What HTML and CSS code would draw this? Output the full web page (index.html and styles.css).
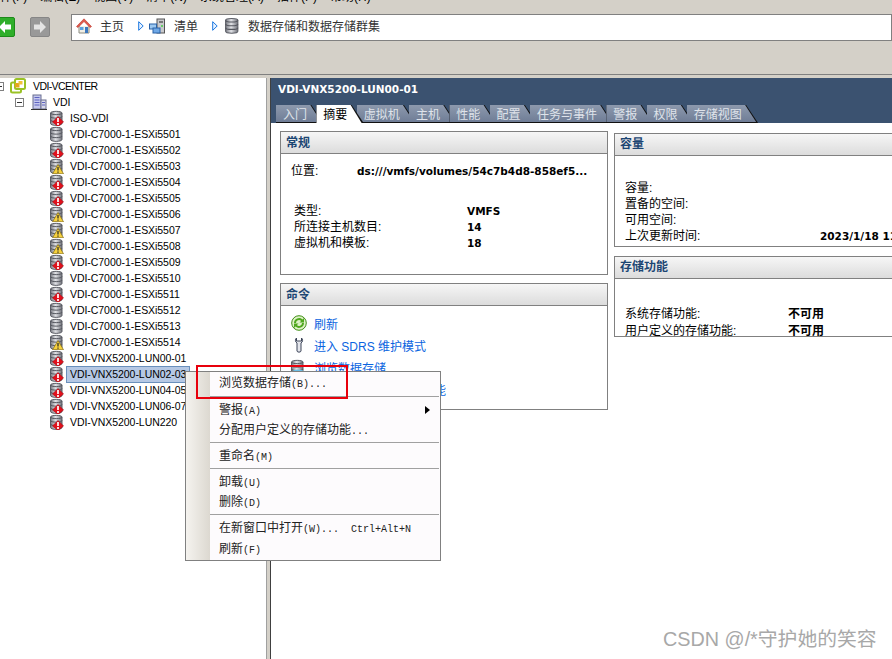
FILE: index.html
```html
<!DOCTYPE html>
<html lang="zh-CN">
<head>
  <meta charset="UTF-8">
  <title>数据存储和数据存储群集</title>
  <link rel="stylesheet" href="styles.css">
</head>
<body>
  <!-- icon sprites -->
  <svg class="sprites" width="0" height="0">
    <defs>
      <linearGradient id="dbFill" x1="0" x2="1" y1="0" y2="0">
        <stop offset="0" stop-color="#777981"/>
        <stop offset=".45" stop-color="#e2e3e7"/>
        <stop offset="1" stop-color="#6f7179"/>
      </linearGradient>
      <symbol id="db" viewBox="0 0 16 16">
        <path d="M.5 3C.5 .8 12 .8 12 3V13.500C12 16 .5 16 .5 13.500Z" fill="url(#dbFill)" stroke="#5c5e66"/>
        <path d="M.5 3C.5 5.200 12 5.200 12 3M.5 6.500C.5 8.700 12 8.700 12 6.500M.5 10C.5 12.200 12 12.200 12 10" fill="none" stroke="#55575f"/>
      </symbol>
      <symbol id="db-error" viewBox="0 0 16 16">
        <use href="#db"/>
        <path d="M8 6.500 13.500 12 8 16.500 2.500 12Z" fill="#e2101c" stroke="#a30a12" stroke-width=".6"/>
        <path d="M8 8V12M8 13V15" stroke="#fff" stroke-width="1.700"/>
      </symbol>
      <symbol id="db-warn" viewBox="0 0 16 16">
        <use href="#db"/>
        <path d="M8 6.500 13.500 15.800H2.500Z" fill="#f7d23e" stroke="#8a7420" stroke-width=".8"/>
        <path d="M8 9V12.600M8 13.400V14.800" stroke="#222" stroke-width="1.200"/>
      </symbol>
    </defs>
  </svg>

  <div class="menubar">
    <span>文件(F)</span><span>编辑(E)</span><span>视图(V)</span><span>清单(N)</span><span>系统管理(A)</span><span>插件(P)</span><span>帮助(H)</span>
  </div>

  <div class="toolbar">
    <div class="nav-btn nav-back">
      <svg width="14" height="14" viewBox="0 0 14 14"><path d="M7 1 1 7l6 6V9.500h6v-5H7Z" fill="#fff"/></svg>
    </div>
    <div class="nav-btn nav-forward">
      <svg width="14" height="14" viewBox="0 0 14 14"><path d="M7 1l6 6-6 6V9.500H1v-5h6Z" fill="#e4e4e4"/></svg>
    </div>
    <div class="address">
      <svg class="crumb-home" width="16" height="16" viewBox="0 0 16 16">
        <path d="M3 8V15H13V8" fill="#f1efe6" stroke="#8b8b80"/>
        <path d="M.5 8.500 8 .8l7.500 7.700-1.500 1L8 3.500 2 9.500Z" fill="#e0584c" stroke="#b8392f" stroke-width=".6"/>
        <rect x="4" y="9" width="3.500" height="3" fill="#5aa0e0"/>
        <rect x="9" y="9" width="3" height="6" fill="#3b78c0"/>
      </svg>
      <span class="crumb crumb-first">主页</span>
      <svg class="crumb-arrow" width="6" height="10" viewBox="0 0 6 10"><path d="M.7.700 5.200 5 .7 9.300Z" fill="#e8f2ff" stroke="#1c78e0"/></svg>
      <svg class="crumb-icon" width="16" height="16" viewBox="0 0 16 16">
        <rect x="8" y="1" width="7.500" height="14" fill="#c9c9cc" stroke="#555"/>
        <rect x="10" y="3" width="4" height="2" fill="#777"/>
        <circle cx="13" cy="8" r="1" fill="#4c4"/>
        <rect x=".5" y="6" width="7" height="5" fill="#9cc8f0" stroke="#2a62a8"/>
        <rect x="4" y="10" width="7" height="5" fill="#6fa8e6" stroke="#2a62a8"/>
      </svg>
      <span class="crumb">清单</span>
      <svg class="crumb-arrow" width="6" height="10" viewBox="0 0 6 10"><path d="M.7.700 5.200 5 .7 9.300Z" fill="#e8f2ff" stroke="#1c78e0"/></svg>
      <svg class="crumb-db" width="14" height="17" viewBox="0 0 13 16"><use href="#db" width="16" height="16"/></svg>
      <span class="crumb">数据存储和数据存储群集</span>
    </div>
  </div>

  <div class="main">
    <div class="tree">
      <div class="tree-row">
        <span class="expander expander-root"></span>
        <svg class="icon-vc" width="16" height="16" viewBox="0 0 16 16">
          <rect x="1" y="4.500" width="10" height="10" rx="1.500" fill="#fff" stroke="#9ac225" stroke-width="2"/>
          <rect x="5" y="1" width="10" height="10" rx="1.500" fill="#fff" stroke="#9ac225" stroke-width="2"/>
          <rect x="5" y="5" width="4.500" height="4.500" fill="#e5a51d"/>
          <rect x="8.500" y="3" width="4" height="3.500" fill="#f0c23a"/>
        </svg>
        <span class="tree-label tree-label-root">VDI-VCENTER</span>
      </div>
      <div class="tree-row">
        <span class="expander expander-dc"></span>
        <svg class="icon-dc" width="16" height="16" viewBox="0 0 16 16">
          <rect x="2" y="1" width="8" height="14" fill="#c5c8ee" stroke="#6a6f90"/>
          <rect x="10" y="6" width="5" height="9" fill="#d7d8e8" stroke="#6a6f90"/>
          <path d="M3.500 3.500h5M3.500 6h5M3.500 8.500h5M3.500 11h5M11 8.500h3M11 11h3" stroke="#5c62c0"/>
          <path d="M0 15.500h16" stroke="#333"/>
        </svg>
        <span class="tree-label tree-label-dc">VDI</span>
      </div>
      <div class="tree-row"><svg class="db-icon" width="16" height="16"><use href="#db-error"/></svg><span class="tree-label">ISO-VDI</span></div>
      <div class="tree-row"><svg class="db-icon" width="16" height="16"><use href="#db"/></svg><span class="tree-label">VDI-C7000-1-ESXi5501</span></div>
      <div class="tree-row"><svg class="db-icon" width="16" height="16"><use href="#db-error"/></svg><span class="tree-label">VDI-C7000-1-ESXi5502</span></div>
      <div class="tree-row"><svg class="db-icon" width="16" height="16"><use href="#db-warn"/></svg><span class="tree-label">VDI-C7000-1-ESXi5503</span></div>
      <div class="tree-row"><svg class="db-icon" width="16" height="16"><use href="#db-error"/></svg><span class="tree-label">VDI-C7000-1-ESXi5504</span></div>
      <div class="tree-row"><svg class="db-icon" width="16" height="16"><use href="#db-error"/></svg><span class="tree-label">VDI-C7000-1-ESXi5505</span></div>
      <div class="tree-row"><svg class="db-icon" width="16" height="16"><use href="#db-warn"/></svg><span class="tree-label">VDI-C7000-1-ESXi5506</span></div>
      <div class="tree-row"><svg class="db-icon" width="16" height="16"><use href="#db-warn"/></svg><span class="tree-label">VDI-C7000-1-ESXi5507</span></div>
      <div class="tree-row"><svg class="db-icon" width="16" height="16"><use href="#db-warn"/></svg><span class="tree-label">VDI-C7000-1-ESXi5508</span></div>
      <div class="tree-row"><svg class="db-icon" width="16" height="16"><use href="#db-error"/></svg><span class="tree-label">VDI-C7000-1-ESXi5509</span></div>
      <div class="tree-row"><svg class="db-icon" width="16" height="16"><use href="#db"/></svg><span class="tree-label">VDI-C7000-1-ESXi5510</span></div>
      <div class="tree-row"><svg class="db-icon" width="16" height="16"><use href="#db-error"/></svg><span class="tree-label">VDI-C7000-1-ESXi5511</span></div>
      <div class="tree-row"><svg class="db-icon" width="16" height="16"><use href="#db"/></svg><span class="tree-label">VDI-C7000-1-ESXi5512</span></div>
      <div class="tree-row"><svg class="db-icon" width="16" height="16"><use href="#db"/></svg><span class="tree-label">VDI-C7000-1-ESXi5513</span></div>
      <div class="tree-row"><svg class="db-icon" width="16" height="16"><use href="#db-warn"/></svg><span class="tree-label">VDI-C7000-1-ESXi5514</span></div>
      <div class="tree-row"><svg class="db-icon" width="16" height="16"><use href="#db-error"/></svg><span class="tree-label">VDI-VNX5200-LUN00-01</span></div>
      <div class="tree-row"><svg class="db-icon" width="16" height="16"><use href="#db-error"/></svg><span class="tree-label tree-selected">VDI-VNX5200-LUN02-03</span></div>
      <div class="tree-row"><svg class="db-icon" width="16" height="16"><use href="#db-error"/></svg><span class="tree-label">VDI-VNX5200-LUN04-05</span></div>
      <div class="tree-row"><svg class="db-icon" width="16" height="16"><use href="#db-error"/></svg><span class="tree-label">VDI-VNX5200-LUN06-07</span></div>
      <div class="tree-row"><svg class="db-icon" width="16" height="16"><use href="#db-error"/></svg><span class="tree-label">VDI-VNX5200-LUN220</span></div>
    </div>

    <div class="splitter"></div>

    <div class="content">
      <div class="content-head">
        <div class="content-title">VDI-VNX5200-LUN00-01</div>
        <div class="tabs">
          <div class="tab"><span>入门</span></div>
          <div class="tab tab-active"><span>摘要</span></div>
          <div class="tab"><span>虚拟机</span></div>
          <div class="tab"><span>主机</span></div>
          <div class="tab"><span>性能</span></div>
          <div class="tab"><span>配置</span></div>
          <div class="tab"><span>任务与事件</span></div>
          <div class="tab"><span>警报</span></div>
          <div class="tab"><span>权限</span></div>
          <div class="tab"><span>存储视图</span></div>
        </div>
      </div>

      <div class="columns">
        <div class="col col-left">
          <section class="panel panel-general">
            <h3 class="panel-title">常规</h3>
            <div class="location">
              <span class="location-label">位置:</span>
              <b class="location-value">ds:///vmfs/volumes/54c7b4d8-858ef5...</b>
            </div>
            <div class="info-rows">
              <div class="info-row"><span class="info-key">类型:</span><b>VMFS</b></div>
              <div class="info-row"><span class="info-key">所连接主机数目:</span><b>14</b></div>
              <div class="info-row"><span class="info-key">虚拟机和模板:</span><b>18</b></div>
            </div>
          </section>

          <section class="panel panel-commands">
            <h3 class="panel-title">命令</h3>
            <div class="commands">
              <a class="command">
                <svg width="16" height="16" viewBox="0 0 16 16">
                  <circle cx="8" cy="8" r="7.300" fill="#dff2c8" stroke="#3f8f14"/>
                  <path d="M3 8a5 5 0 0 1 8.500-3.500L13 3v4.500H8.500l1.600-1.600A3 3 0 0 0 5 8ZM13 8a5 5 0 0 1-8.500 3.500L3 13V8.500h4.500l-1.600 1.600A3 3 0 0 0 11 8Z" fill="#4fa81e"/>
                </svg>
                <span>刷新</span>
              </a>
              <a class="command">
                <svg width="16" height="16" viewBox="0 0 16 16">
                  <path d="M5.500 1V4H10.500V1C12 2 12 5 10 6V14C10 15.500 6 15.500 6 14V6C4 5 4 2 5.500 1Z" fill="#e4e6ec" stroke="#3c4458"/>
                </svg>
                <span>进入 SDRS 维护模式</span>
              </a>
              <a class="command">
                <svg width="16" height="16" viewBox="0 0 16 16">
                  <use href="#db"/>
                  <ellipse cx="7" cy="13" rx="6" ry="2.500" fill="#6cc0e8"/>
                </svg>
                <span>浏览数据存储...</span>
              </a>
              <a class="command">
                <svg width="16" height="16" viewBox="0 0 16 16"><use href="#db"/></svg>
                <span>分配用户定义的存储功能</span>
              </a>
            </div>
          </section>
        </div>

        <div class="col col-right">
          <section class="panel panel-capacity">
            <h3 class="panel-title">容量</h3>
            <div class="side-rows">
              <div class="side-row"><span class="side-key">容量:</span></div>
              <div class="side-row"><span class="side-key">置备的空间:</span></div>
              <div class="side-row"><span class="side-key">可用空间:</span></div>
              <div class="side-row"><span class="side-key">上次更新时间:</span><b class="side-date">2023/1/18 11:30:00</b></div>
            </div>
          </section>

          <section class="panel panel-storage">
            <h3 class="panel-title">存储功能</h3>
            <div class="caps">
              <div class="cap-row"><span class="cap-key">系统存储功能:</span><b>不可用</b></div>
              <div class="cap-row"><span class="cap-key">用户定义的存储功能:</span><b>不可用</b></div>
            </div>
          </section>
        </div>
      </div>
    </div>
  </div>

  <!-- context menu on top of the tree -->
  <div class="context-menu">
    <div class="menu-item menu-item-first">浏览数据存储<span class="menu-key">(B)...</span></div>
    <div class="menu-sep"></div>
    <div class="menu-item">警报<span class="menu-key">(A)</span><span class="submenu-arrow"></span></div>
    <div class="menu-item">分配用户定义的存储功能<span class="menu-key">...</span></div>
    <div class="menu-sep"></div>
    <div class="menu-item">重命名<span class="menu-key">(M)</span></div>
    <div class="menu-sep"></div>
    <div class="menu-item">卸载<span class="menu-key">(U)</span></div>
    <div class="menu-item">删除<span class="menu-key">(D)</span></div>
    <div class="menu-sep"></div>
    <div class="menu-item">在新窗口中打开<span class="menu-key">(W)...</span><span class="shortcut">Ctrl+Alt+N</span></div>
    <div class="menu-item">刷新<span class="menu-key">(F)</span></div>
  </div>

  <div class="red-box"></div>
  <div class="watermark">CSDN @/*守护她的笑容</div>
</body>
</html>
```

FILE: styles.css
```css
body {
  margin: 0;
  width: 892px;
  height: 659px;
  overflow: hidden;
  position: relative;
  background-color: #d4d0c8;
  font-family: "Liberation Sans", "Noto Sans CJK SC", sans-serif;
  font-size: 12px;
  color: #000;
}

.sprites {
  position: absolute;
}

/* Menu bar, only the bottom of the text is left in the picture */
.menubar {
  height: 5px;
  overflow: hidden;
  display: flex;
  gap: 13px;
  margin-left: -12px;
  line-height: 12px;
  white-space: nowrap;
}

.menubar span {
  margin-top: -9px;
}

/* Toolbar */
.toolbar {
  height: 70px;
  display: flex;
  align-items: flex-start;
  box-sizing: border-box;
  padding-top: 9px;
  border-bottom: 1px solid #808080;
}

.nav-btn {
  width: 18px;
  height: 18px;
  border-radius: 2px;
  display: flex;
  align-items: center;
  justify-content: center;
  margin-top: 3px;
}

.nav-back {
  background-color: #2fae2a;
  border: 1px solid #1d8a1a;
  margin-left: -5px;
}

.nav-forward {
  background-color: #999;
  border: 1px solid #868686;
  margin-left: 15px;
}

.address {
  flex: 1;
  height: 27px;
  margin-left: 21px;
  background-color: #fff;
  border: 1px solid #808080;
  box-sizing: border-box;
  display: flex;
  align-items: center;
  padding: 0 0 4px 4px;
  font-size: 12px;
  color: #333;
}

.crumb-first {
  margin-left: 8px;
}

.crumb-arrow {
  margin-left: 14px;
}

.crumb-icon {
  margin-left: 5px;
  margin-right: 9px;
}

.crumb-db {
  margin-left: 7px;
  margin-right: 9px;
}

.crumb-home {
  flex: none;
}

/* Main area */
.main {
  height: 584px;
  display: flex;
  border-top: 3px solid #d4d0c8;
  box-sizing: border-box;
  background-color: #fff;
}

.tree {
  width: 266px;
  background-color: #fff;
}

.tree-row {
  height: 16px;
  display: flex;
  align-items: center;
  padding-left: 50px;
}

.tree-row:nth-child(1) {
  padding-left: 0;
}

.tree-row:nth-child(2) {
  padding-left: 15px;
}

.tree-label {
  margin-left: 1px;
  padding: 0 3px;
  font-size: 10.5px;
  letter-spacing: -.05px;
  line-height: 15px;
  white-space: nowrap;
}

.tree-label-root {
  margin-left: 4px;
  letter-spacing: -.6px;
}

.tree-label-dc {
  margin-left: 3px;
}

.tree-selected {
  background-color: #b5c8e4;
  outline: 1px solid #6a90bc;
}

.expander {
  width: 7px;
  height: 7px;
  border: 1px solid #808080;
  background: linear-gradient(#333, #333) center / 5px 1px no-repeat #fff;
  flex: none;
}

.expander-root {
  margin-left: -5px;
  margin-right: 6px;
}

.expander-dc {
  margin-right: 7px;
}

.db-icon {
  flex: none;
}

.splitter {
  width: 3px;
  background-color: #d4d0c8;
  border-right: 1px solid #404040;
  border-left: 1px solid #a0a0a0;
}

/* Right side */
.content {
  flex: 1;
  min-width: 0;
  overflow: hidden;
  background-color: #fff;
}

.content-head {
  height: 45px;
  background-color: #3b5270;
  box-sizing: border-box;
  padding-top: 4px;
}

.content-title {
  font-weight: bold;
  color: #fff;
  padding-left: 7px;
  line-height: 14px;
  font-family: "DejaVu Sans", "Noto Sans CJK SC", sans-serif;
  font-size: 10.5px;
}

.tabs {
  display: flex;
  margin-top: 9px;
  padding-left: 5px;
}

.tab {
  position: relative;
  height: 18px;
  margin-right: -7px;
  background-color: #111;
  clip-path: polygon(0 0, calc(100% - 12px) 0, 100% 100%, 0 100%);
}

.tab span {
  display: block;
  height: 17px;
  padding: 1px 16.300px 0 7px;
  box-sizing: border-box;
  line-height: 18px;
  color: #dfe3ea;
  background: linear-gradient(#8d99ad, #6f7d96);
  clip-path: polygon(0 0, calc(100% - 13px) 0, calc(100% - 2px) 100%, 0 100%);
}

.tab-active {
  z-index: 1;
}

.tab-active span {
  color: #000;
  background: #fff;
  height: 18px;
}

.columns {
  display: flex;
  gap: 6px;
  padding-top: 8px;
  padding-left: 9px;
}

.col-left {
  width: 328px;
  flex: none;
  display: flex;
  flex-direction: column;
  gap: 8px;
}

.col-right {
  width: 400px;
  flex: none;
  display: flex;
  flex-direction: column;
  gap: 9px;
  padding-top: 2px;
}

.panel {
  box-sizing: border-box;
  border: 1px solid #808080;
  background-color: #fff;
  overflow: hidden;
}

.panel-title {
  margin: 0;
  height: 21px;
  padding-left: 5px;
  font-size: 12px;
  line-height: 20px;
  font-weight: bold;
  color: #1c4673;
  background: linear-gradient(#f6f6f6, #dcdcdc);
  border-bottom: 1px solid #808080;
}

.panel-general {
  height: 144px;
}

.panel-general .panel-title,
.panel-commands .panel-title {
  line-height: 23px;
}

.location {
  display: flex;
  padding-left: 10px;
  margin-top: 9px;
  line-height: 16px;
}

.location-label {
  width: 66px;
}

.location-value,
.info-row b,
.side-date {
  font-family: "DejaVu Sans", "Noto Sans CJK SC", sans-serif;
  font-size: 10.5px;
}

.location-value {
  white-space: nowrap;
}

.info-rows {
  margin-top: 24px;
  padding-left: 13px;
}

.info-row {
  display: flex;
  height: 16px;
  line-height: 16px;
}

.info-key {
  width: 173px;
}

.panel-commands {
  height: 127px;
}

.commands {
  padding: 6px 0 0 10px;
}

.command {
  display: flex;
  align-items: center;
  gap: 7px;
  height: 22px;
  color: #0a64e0;
}

.panel-capacity {
  height: 114px;
}

.side-rows {
  margin-top: 24px;
  padding-left: 10px;
}

.side-row {
  display: flex;
  height: 16px;
  line-height: 16px;
  white-space: nowrap;
}

.side-key {
  width: 195px;
}

.panel-storage {
  height: 81px;
}

.caps {
  margin-top: 27px;
  padding-left: 10px;
}

.cap-row {
  display: flex;
  height: 17px;
  line-height: 17px;
}

.cap-key {
  width: 163px;
}

/* Context menu */
.context-menu {
  position: absolute;
  left: 185px;
  top: 371px;
  width: 256px;
  height: 190px;
  box-sizing: border-box;
  border: 1px solid #808080;
  background: linear-gradient(90deg, #f5f3ef, #dcd8d0) 0 0 / 24px 100% no-repeat #fdfbfd;
  padding-top: 1px;
}

.menu-item {
  position: relative;
  height: 20px;
  line-height: 20px;
  padding-left: 33px;
  font-size: 12px;
  color: #222;
  white-space: nowrap;
}

.menu-item:nth-of-type(11) {
  height: 22px;
}

.menu-item:nth-of-type(12) {
  height: 22px;
  line-height: 18px;
}

.menu-item-first {
  height: 21px;
  line-height: 21px;
}

.menu-key {
  font-family: "Liberation Mono", monospace;
  font-size: 10px;
}

.menu-sep {
  height: 1px;
  margin: 2px 1px 3px 24px;
  background-color: #a0a0a0;
}

.submenu-arrow {
  position: absolute;
  right: 10px;
  top: 6px;
  border-left: 5px solid #000;
  border-top: 4px solid transparent;
  border-bottom: 4px solid transparent;
}

.shortcut {
  margin-left: 12px;
  font-family: "Liberation Mono", monospace;
  font-size: 10px;
}

.red-box {
  position: absolute;
  left: 196px;
  top: 365px;
  width: 148px;
  height: 30px;
  border: 2px solid #e8000c;
}

.watermark {
  position: absolute;
  left: 663px;
  top: 627px;
  font-size: 19.800px;
  line-height: 24px;
  color: #a8a8a8;
  white-space: nowrap;
}
```
